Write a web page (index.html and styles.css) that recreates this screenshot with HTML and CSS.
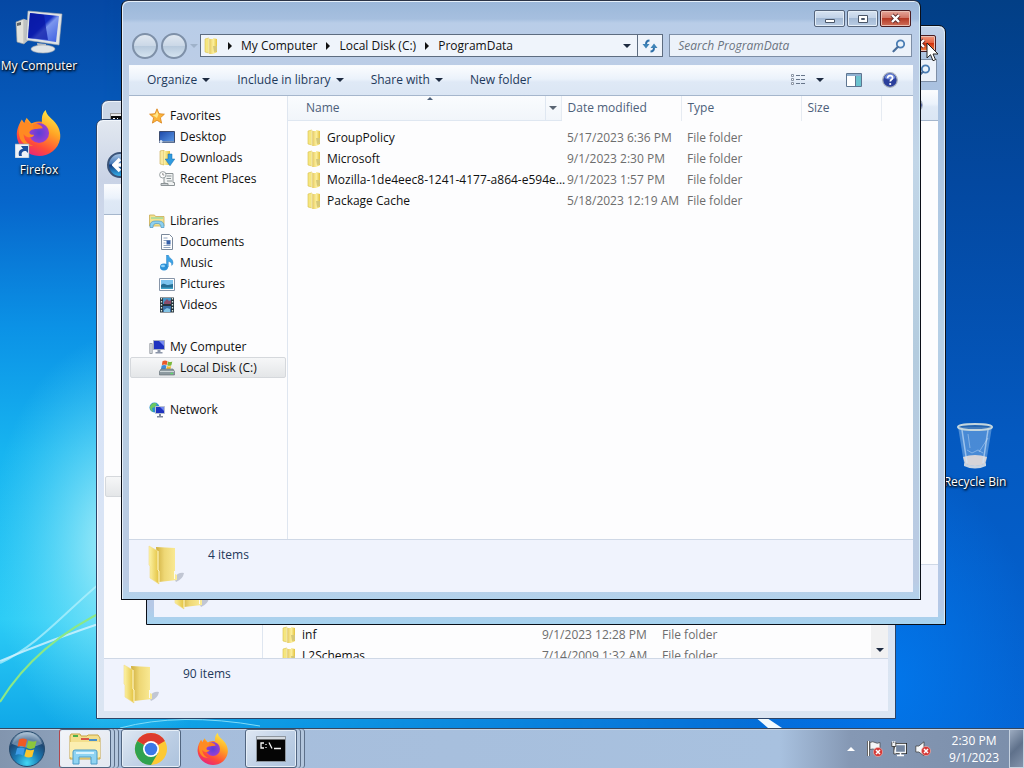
FILE: index.html
```html
<!DOCTYPE html>
<html lang="en">
<head>
<meta charset="utf-8">
<title>Desktop</title>
<link rel="stylesheet" href="styles.css">
</head>
<body>
<svg class="defs" aria-hidden="true">
  <defs>
    <linearGradient id="gFold" x1="0" x2="1"><stop offset="0" stop-color="#fdf3a6"/><stop offset="1" stop-color="#e3c23f"/></linearGradient>
    <linearGradient id="gFold2" x1="0" x2="1"><stop offset="0" stop-color="#cfae3e"/><stop offset=".4" stop-color="#eed775"/><stop offset="1" stop-color="#fbec98"/></linearGradient>
    <linearGradient id="gScreen" x1="0" y1="0" x2="1" y2="1"><stop offset="0" stop-color="#0a1fa8"/><stop offset=".45" stop-color="#1430c4"/><stop offset=".55" stop-color="#7b96ee"/><stop offset="1" stop-color="#3a5ce0"/></linearGradient>
    <linearGradient id="gFox" x1=".8" y1="0" x2=".3" y2="1"><stop offset="0" stop-color="#fff04a"/><stop offset=".4" stop-color="#ffa425"/><stop offset=".75" stop-color="#ff4b3a"/><stop offset="1" stop-color="#e8227e"/></linearGradient>
    <radialGradient id="gPurple"><stop offset="0" stop-color="#5a3fd8"/><stop offset="1" stop-color="#9a3fd0"/></radialGradient>
    <radialGradient id="gOrb" cx=".5" cy=".9" r=".9"><stop offset="0" stop-color="#42d8f4"/><stop offset=".4" stop-color="#1a7ab4"/><stop offset=".75" stop-color="#1d4672"/><stop offset="1" stop-color="#a9c0d4"/></radialGradient>
    <linearGradient id="gBlue" x1="0" y1="0" x2="1" y2="1"><stop offset="0" stop-color="#1c48a8"/><stop offset="1" stop-color="#5e9be8"/></linearGradient>

    <symbol id="folder" viewBox="0 0 16 18">
      <path d="M2 2l4-1v15l-4-1z" fill="#f5e67f" stroke="#d9c04a" stroke-width=".6"/>
      <path d="M6 2h4v15H6z" fill="url(#gFold2)"/>
      <path d="M10 1l4 1v13l-4 2z" fill="url(#gFold)"/>
      <path d="M10 9h4v5l-3 1z" fill="#d6c878"/>
      <path d="M6 1v16" stroke="#fffbe0" stroke-width=".8"/>
    </symbol>
    <symbol id="bigfolder" viewBox="0 0 38 42">
      <path d="M26 34q4-6 10-5-1 6-8 9z" fill="#7b8294" opacity=".4"/>
      <path d="M8 3l19 1v26l2 1v5l-18 2z" fill="url(#gFold2)"/>
      <path d="M1 2l9 5v19l1 1v13l-9-6V22l-1-1z" fill="url(#gFold)" stroke="#f1dc8c" stroke-width=".6"/>
      <path d="M10 7v19l1 1v12" stroke="#fff6c4" fill="none"/>
      <path d="M26 27h1v8h-1z" fill="#fbfbf0"/>
    </symbol>
    <symbol id="star" viewBox="0 0 16 16"><path d="M8 .8l2 4.900 5.400.5-4 3.600 1.200 5.300L8 12.300l-4.600 2.800 1.200-5.300-4-3.600L6 5.700z" fill="#fbb43a" stroke="#d98118" stroke-width=".8"/><path d="M8 3l1.400 3.500L8 10 3.500 7l3-.4z" fill="#ffe68a"/></symbol>
    <symbol id="desk" viewBox="0 0 16 16"><path d="M.5 2.500h15v11H.5z" fill="url(#gBlue)" stroke="#3c4c70"/><path d="M1 12h14v1.500H1z" fill="#7e96b8"/><circle cx="2" cy="12.500" r="1.500" fill="#dbe8f6"/></symbol>
    <symbol id="down" viewBox="0 0 16 16"><path d="M1 1l4-1v15l-4-1z" fill="#f8e9a0" stroke="#c9a94a" stroke-width=".6"/><path d="M5 1h6v14H5z" fill="url(#gFold)"/><path d="M9 4h4v5h2.800L11 15.800 6.200 9H9z" fill="#2f9be0" stroke="#1d6cab" stroke-width=".5"/></symbol>
    <symbol id="recent" viewBox="0 0 16 16"><path d="M5 2.500h9v9h1.500v3H6.500V12H5z" fill="#f1f3f3" stroke="#8d9497"/><path d="M7.500 5h5M7.500 7.500h4.500M8 10h5" stroke="#8a9396" fill="none"/><path d="M2 12.500h7v2H2z" fill="#c8cdd0" stroke="#8d9497"/><circle cx="3.800" cy="3.800" r="3.200" fill="#fff" stroke="#9aa1a4"/><path d="M3.800 2v2h1.500" stroke="#666" fill="none" stroke-width=".7"/></symbol>
    <symbol id="lib" viewBox="0 0 16 16"><path d="M.5 2h5l1 1.500H15V13H.5z" fill="#f5e28e" stroke="#c9ac53" stroke-width=".8"/><path d="M2 4h12v2H2z" fill="#b5dc9a"/><path d="M1 14.500c0-5 1-6.500 7-6.500s7 1.500 7 6.500h-3c0-3-1-4-4-4s-4 1-4 4z" fill="#8ed0f0" stroke="#4a95c4" stroke-width=".7"/></symbol>
    <symbol id="doc" viewBox="0 0 16 16"><path d="M2.500.5h8l3 3v12h-11z" fill="#fff" stroke="#7c8a9c"/><path d="M4.500 4h4M4.500 6.500h7M4.500 9h2M4.500 11.500h7M4.500 13.500h7" stroke="#90a4c0"/><path d="M7.500 6.500h4v4h-4z" fill="#345fa8"/></symbol>
    <symbol id="music" viewBox="0 0 16 16"><ellipse cx="5" cy="12" rx="4" ry="3.400" fill="#2b91d8"/><path d="M7.500 0h1.800c.4 3 4.700 3.500 4.700 7.500 0 1.500-.6 2.500-1.300 3C13 7.500 11 6.500 9.300 6.500V12H7.500z" fill="#3ca3e6" stroke="#1e74b8" stroke-width=".4"/><ellipse cx="4" cy="11" rx="2" ry="1.300" fill="#8fd2fa"/></symbol>
    <symbol id="pic" viewBox="0 0 16 16"><path d="M.5 2.500h15v12H.5z" fill="#fff" stroke="#8795a8"/><path d="M2 4h12v9H2z" fill="#7cc4ee"/><path d="M2 9c3-3 5 0 7 0s3-1 5-1v5H2z" fill="#266f94"/><path d="M2 11.500h12V13H2z" fill="#3fa3c8"/></symbol>
    <symbol id="video" viewBox="0 0 16 16"><path d="M1 .5h14v15H1z" fill="#26333c"/><path d="M4 1h8v6H4z" fill="#4597c8"/><path d="M4 9h8v6H4z" fill="#3a70a8"/><path d="M5 5l3-3 2 2 2-1v4H5z" fill="#8a4d6c"/><path d="M5 13l3-2 3 1v3H5z" fill="#83c3e4"/><path d="M2.500 1v14M13.500 1v14" stroke="#d8eae4" stroke-width="1.300" stroke-dasharray="1.500 1.500"/></symbol>
    <symbol id="comp" viewBox="0 0 16 16"><path d="M.8 4.500h2.400v10H.8z" fill="#dde1e4" stroke="#8b9299" stroke-width=".8"/><path d="M4.500 1.500h11v9h-11z" fill="#1f33c0" stroke="#a8afc0"/><path d="M10 2h5v5z" fill="#7a8df0"/><path d="M8.500 11h3v2h2v1.500h-7V13h2z" fill="#8b95a8"/></symbol>
    <symbol id="disk" viewBox="0 0 16 16"><path d="M3.500 1.200q2.500-1.500 5 0L7.700 5q-2.200-1.200-4.800 0z" fill="#e8592a"/><path d="M9 1.500q2 1 4.300 0L12.400 5.200q-2 1-4.200 0z" fill="#7ab83c"/><path d="M2.700 5.500q2.500-1.200 4.800 0L6.700 9H2z" fill="#3d8ad8"/><path d="M8 6q2 1 4.200 0L11.400 9H7.300z" fill="#f5bd30"/><path d="M2 9h12l1.500 2.500v3.500H.5v-3.500z" fill="#8d9aa0" stroke="#5e6a70" stroke-width=".6"/><path d="M1 11.500h14" stroke="#cdd6d8"/><path d="M11.500 13.500h2.500" stroke="#5be06a" stroke-width="1.400"/></symbol>
    <symbol id="net" viewBox="0 0 16 16"><circle cx="5.500" cy="5.500" r="5" fill="#2a8fd0"/><path d="M2 3c2-3 5-2 6-1L6 5 3 6l1 4C1 8 0 5 2 3z" fill="#6cc760"/><path d="M6.500 4.500h9v7h-9z" fill="#1f33c0" stroke="#b8c0d0"/><path d="M11 5h4v4z" fill="#7288f0"/><path d="M10 12h2v2h2v1.500H8V14h2z" fill="#7c879c"/></symbol>
    <symbol id="mag" viewBox="0 0 14 14"><circle cx="8.500" cy="5" r="3.700" fill="#eaf4fc" fill-opacity=".6" stroke="#4a7db4" stroke-width="1.800"/><path d="M5.700 8L1.500 12.300" stroke="#4a6f9c" stroke-width="2.200" stroke-linecap="round"/></symbol>
    <symbol id="help" viewBox="0 0 16 16"><circle cx="8" cy="8" r="7.300" fill="#2b3f9c" stroke="#a8b0bc" stroke-width="1.200"/><path d="M2.500 6a5.600 5.600 0 0 1 11 0Q8 9 2.500 6z" fill="#6b85d8"/><path d="M5.600 6.200q0-2.500 2.500-2.500t2.500 2.200c0 1.600-2.300 1.700-2.300 3.500" fill="none" stroke="#fff" stroke-width="1.700"/><circle cx="8.200" cy="12" r="1.100" fill="#fff"/></symbol>
    <symbol id="fox" viewBox="0 0 48 48">
      <circle cx="24" cy="27" r="15" fill="#ff7a2a"/>
      <path d="M27 9c0-4 2-7 4-9 1 5 4 7 8 11 6 6 8 13 7 19-2 11-11 18-22 18S2 39 1 28C0 20 4 14 6 10l3 4 2-6 5 6c3-1 7-1 11 1z" fill="url(#gFox)"/>
      <circle cx="24" cy="24" r="10.500" fill="url(#gPurple)"/>
      <path d="M5 12l3 3 2-5 6 5c3-1 6 1 7 4-3 1-8 1-9 4 0 3 3 3 5 3-2 4-9 3-11-1 0 6 4 11 10 12C8 39 2 31 3 20z" fill="#ff8a22"/>
      <path d="M18 14c5 0 9 2 10 5l-10 1z" fill="#ff7e25"/>
    </symbol>
    <symbol id="bad" viewBox="0 0 10 10"><circle cx="5" cy="5" r="4.600" fill="#d63a38" stroke="#f0b8b4" stroke-width=".6"/><path d="M3 3l4 4M7 3L3 7" stroke="#fff" stroke-width="1.500"/></symbol>
  </defs>
</svg>

<div class="screen">
<main class="desktop">
  <svg class="wallpaper" viewBox="0 0 1024 728" preserveAspectRatio="none" aria-hidden="true">
    <defs>
      <linearGradient id="wBase" x1="0" x2="0" y1="0" y2="1"><stop offset="0" stop-color="#0548a4"/><stop offset=".28" stop-color="#0767cc"/><stop offset=".45" stop-color="#0b92e6"/><stop offset=".62" stop-color="#17b4f0"/><stop offset=".85" stop-color="#2cccf6"/><stop offset="1" stop-color="#10a8e8"/></linearGradient>
      <linearGradient id="wRight" x1="0" x2="0" y1="0" y2="1"><stop offset="0" stop-color="#023f86"/><stop offset=".25" stop-color="#0348a0"/><stop offset=".6" stop-color="#0459c0"/><stop offset="1" stop-color="#0464d4"/></linearGradient>
      <linearGradient id="wMask" x1="0" x2="1"><stop offset=".1" stop-color="#000"/><stop offset=".85" stop-color="#fff"/></linearGradient>
      <mask id="wM"><path d="M0 0h1024v728H0z" fill="url(#wMask)"/></mask>
      <radialGradient id="wGlow"><stop offset="0" stop-color="#c4f6fa" stop-opacity=".9"/><stop offset="1" stop-color="#62e0f8" stop-opacity="0"/></radialGradient>
      <radialGradient id="wLow"><stop offset="0" stop-color="#0276ea"/><stop offset="1" stop-color="#0276ea" stop-opacity="0"/></radialGradient>
    </defs>
    <path d="M0 0h1024v728H0z" fill="url(#wBase)"/>
    <path d="M0 0h1024v728H0z" fill="url(#wRight)" mask="url(#wM)"/>
    <ellipse cx="120" cy="545" rx="130" ry="210" fill="url(#wGlow)"/>
    <ellipse cx="890" cy="680" rx="150" ry="220" fill="url(#wLow)"/>
    <path d="M0 663C40 645 70 606 110 575" fill="none" stroke="#b8f2fc" stroke-width="2" opacity=".7"/>
    <path d="M0 661Q50 640 110 620" fill="none" stroke="#d6f4ff" stroke-width="2" opacity=".8"/>
    <path d="M0 702Q36 643 110 608" fill="none" stroke="#8be886" stroke-width="2"/>
    <path d="M120 728Q180 712 260 726" fill="none" stroke="#7fdcf8" stroke-width="1"/>
    <path d="M754 716h10l18 12h-14z" fill="#f2fbff"/>
  </svg>

  <a href="#computer" class="shortcut sc-computer">
    <svg width="48" height="44" viewBox="0 0 48 44"><path d="M1 12l8-3v25l-7-2z" fill="#e2e2dc" stroke="#9a9c98" stroke-width=".6"/><path d="M9 9l6 2v18l-6 5z" fill="#bfc2c2"/><path d="M2 13l4-1v3l-4 1z" fill="#5f6568"/><path d="M13 1l34 3-3 31-33-5z" fill="#dfe3e6" stroke="#a4a9ae" stroke-width=".6"/><path d="M15 3l29 3-3 26-28-4z" fill="url(#gScreen)"/><path d="M15 3l14 2 4 25-20-2z" fill="#0716a4" opacity=".7"/><path d="M22 33l9 1v4h-8z" fill="#b9bec4"/><ellipse cx="28" cy="39" rx="12" ry="4" fill="#dfe3e6" stroke="#a4a9ae" stroke-width=".6"/></svg>
    <span>My Computer</span>
  </a>
  <a href="#firefox" class="shortcut sc-firefox">
    <svg width="48" height="48" viewBox="0 0 48 48"><use href="#fox" width="46" height="46" x="1"/><path d="M0 34h14v14H0z" fill="#eef3f8" stroke="#8a9bb0" stroke-width=".6"/><path d="M4 46c-1-5 1-7 4-7l-2-3h7v7l-2-2c-4 0-5 2-4 5z" fill="#1c4f9c"/></svg>
    <span>Firefox</span>
  </a>
  <a href="#bin" class="shortcut sc-bin">
    <svg width="40" height="48" viewBox="0 0 40 48"><path d="M3 5h34l-6 36q-11 6-22 0z" fill="#a9d0f4" fill-opacity=".42"/><path d="M8 35q12-4 24 0l-2 7q-10 4-20 0z" fill="#e6dcd8" opacity=".9"/><path d="M7 8l5 33M33 8l-5 33" stroke="#d4e8fb" stroke-width="1.500" opacity=".6"/><path d="M13 12l2 14M24 30l9-14M12 28l5 3 6-3 5 3" stroke="#dcecfb" opacity=".4" fill="none"/><path d="M9 41q11 5 22 0v3q-11 5-22 0z" fill="#c8d4e2"/><ellipse cx="20" cy="5" rx="17" ry="3" fill="#3b6ea8" fill-opacity=".6" stroke="#c4d6de" stroke-width="2"/></svg>
    <span>Recycle Bin</span>
  </a>

  <section class="window console" aria-label="Console">
    <svg width="16" height="16" viewBox="0 0 16 16"><path d="M.5.5h15v15H.5z" fill="#0a0a0a" stroke="#9a9a9a"/><path d="M1 1h14v2H1z" fill="#e8e8e8"/><path d="M3 5h2v1H3zM7 5h1v3H7z" fill="#fff"/></svg>
  </section>

  <section class="window w-back" aria-label="Background folder">
    <div class="caption"></div>
    <div class="navrow">
      <button class="round lit" aria-label="Back"><svg width="16" height="16" viewBox="0 0 16 16"><path d="M8 2L2 8l6 6M2 8h12" stroke="#fff" stroke-width="3.500" fill="none"/></svg></button>
    </div>
    <div class="toolbar"></div>
    <div class="body">
      <nav class="side"><a class="item picked ghost" href="#c" aria-label="Drive"></a></nav>
      <div class="files tail">
        <table class="list">
          <colgroup><col class="c-name"><col class="c-date"><col class="c-type"><col></colgroup>
          <tbody>
            <tr><td><div class="fname"><svg width="16" height="18"><use href="#folder"/></svg><span>inf</span></div></td><td>9/1/2023 12:28 PM</td><td>File folder</td><td></td></tr>
            <tr><td><div class="fname"><svg width="16" height="18"><use href="#folder"/></svg><span>L2Schemas</span></div></td><td>7/14/2009 1:32 AM</td><td>File folder</td><td></td></tr>
          </tbody>
        </table>
      </div>
      <div class="scroll"><button aria-label="Scroll down"><i class="tri"></i></button></div>
    </div>
    <footer class="details"><svg width="38" height="42"><use href="#bigfolder"/></svg><span>90 items</span></footer>
  </section>

  <section class="window w-mid" aria-label="Second folder">
    <div class="caption"><button class="cap close hot" aria-label="Close"><svg width="13" height="11" viewBox="0 0 13 11"><path d="M3 2l7 7M10 2L3 9" stroke="#6b2a22" stroke-width="4"/><path d="M3 2l7 7M10 2L3 9" stroke="#fff" stroke-width="2.400"/></svg></button></div>
    <div class="navrow"><span class="grow"></span><div class="search"><input aria-label="Search"><svg width="14" height="14"><use href="#mag"/></svg></div></div>
    <div class="toolbar"><span class="grow"></span><button class="tool" aria-label="Help"><svg width="16" height="16"><use href="#help"/></svg></button></div>
    <div class="body"></div>
    <footer class="details"><svg width="38" height="42"><use href="#bigfolder"/></svg></footer>
  </section>

  <section class="window w-front" aria-label="ProgramData">
    <div class="caption">
      <button class="cap" aria-label="Minimize"><svg width="12" height="10" viewBox="0 0 12 10"><path d="M1.500 5.500h9v3h-9z" fill="#fff" stroke="#4a5668"/></svg></button>
      <button class="cap" aria-label="Maximize"><svg width="12" height="10" viewBox="0 0 12 10"><path d="M1.500 1.500h9v7h-9z" fill="#fff" stroke="#4a5668"/><path d="M4.500 4.500h3v1h-3z" fill="#b8c8dc" stroke="#4a5668"/></svg></button>
      <button class="cap close" aria-label="Close"><svg width="13" height="11" viewBox="0 0 13 11"><path d="M3 2l7 7M10 2L3 9" stroke="#5c2a2a" stroke-width="4"/><path d="M3 2l7 7M10 2L3 9" stroke="#fff" stroke-width="2.400"/></svg></button>
    </div>
    <div class="navrow">
      <div class="pair">
        <button class="round" aria-label="Back"></button>
        <button class="round" aria-label="Forward"></button>
        <button class="histo" aria-label="Recent pages"><i class="tri pale"></i></button>
      </div>
      <div class="address">
        <svg width="16" height="18"><use href="#folder"/></svg>
        <i class="chev"></i><button>My Computer</button>
        <i class="chev"></i><button>Local Disk (C:)</button>
        <i class="chev"></i><button>ProgramData</button>
        <span class="grow"></span>
        <button class="drop" aria-label="Previous locations"><i class="tri"></i></button>
        <button class="refresh" aria-label="Refresh"><svg width="16" height="14" viewBox="0 0 16 14"><path d="M7.500 1.500q-3.500 0-3.500 4M8.500 12.500q3.500 0 3.500-4" stroke="#2f6fa8" stroke-width="2" fill="none"/><path d="M.5 5h7L4 9.500zM8.500 9h7L12 4.500z" fill="#3f84b8"/></svg></button>
      </div>
      <div class="search"><input type="search" aria-label="Search ProgramData" placeholder="Search ProgramData"><svg width="14" height="14"><use href="#mag"/></svg></div>
    </div>
    <div class="toolbar">
      <button class="t1">Organize <i class="tri"></i></button>
      <button class="t2">Include in library <i class="tri"></i></button>
      <button class="t3">Share with <i class="tri"></i></button>
      <button>New folder</button>
      <span class="grow"></span>
      <button class="tool" aria-label="Change view"><svg width="16" height="14" viewBox="0 0 16 14"><path d="M1.500 1.500h2v2h-2zM1.500 5.500h2v2h-2zM1.500 9.500h2v2h-2z" fill="#fff" stroke="#8a94a4"/><path d="M6 2.500h4M11 2.500h4M6 6.500h4M11 6.500h4M6 10.500h4M11 10.500h4" stroke="#67758a"/></svg></button>
      <button class="tool more" aria-label="More options"><i class="tri"></i></button>
      <button class="tool" aria-label="Preview pane"><svg width="16" height="14" viewBox="0 0 16 14"><path d="M.5.5h15v13H.5z" fill="#fff" stroke="#5e7590"/><path d="M1 1h14v2H1z" fill="#8fb0d0"/><path d="M10 3h5v10h-5z" fill="#6cc3cf"/><path d="M9.500 3v10" stroke="#5e7590"/></svg></button>
      <button class="tool" aria-label="Help"><svg width="16" height="16"><use href="#help"/></svg></button>
    </div>
    <div class="body">
      <nav class="side">
        <a class="item top" href="#fav"><svg width="16" height="16"><use href="#star"/></svg>Favorites</a>
        <a class="item" href="#desktop"><svg width="16" height="16"><use href="#desk"/></svg>Desktop</a>
        <a class="item" href="#downloads"><svg width="16" height="16"><use href="#down"/></svg>Downloads</a>
        <a class="item" href="#recent"><svg width="16" height="16"><use href="#recent"/></svg>Recent Places</a>
        <a class="item top gap" href="#libraries"><svg width="16" height="16"><use href="#lib"/></svg>Libraries</a>
        <a class="item" href="#documents"><svg width="16" height="16"><use href="#doc"/></svg>Documents</a>
        <a class="item" href="#music"><svg width="16" height="16"><use href="#music"/></svg>Music</a>
        <a class="item" href="#pictures"><svg width="16" height="16"><use href="#pic"/></svg>Pictures</a>
        <a class="item" href="#videos"><svg width="16" height="16"><use href="#video"/></svg>Videos</a>
        <a class="item top gap" href="#mycomputer"><svg width="16" height="16"><use href="#comp"/></svg>My Computer</a>
        <a class="item picked" href="#drive"><svg width="16" height="16"><use href="#disk"/></svg>Local Disk (C:)</a>
        <a class="item top gap" href="#network"><svg width="16" height="16"><use href="#net"/></svg>Network</a>
      </nav>
      <div class="files">
        <table class="list">
          <colgroup><col class="c-name"><col class="c-date"><col class="c-type"><col class="c-size"><col></colgroup>
          <thead><tr><th class="sorted"><div class="hname">Name<i class="up"></i><span class="filter"><i class="tri grey"></i></span></div></th><th>Date modified</th><th>Type</th><th>Size</th><th></th></tr></thead>
          <tbody>
            <tr><td><div class="fname"><svg width="16" height="18"><use href="#folder"/></svg><span>GroupPolicy</span></div></td><td>5/17/2023 6:36 PM</td><td>File folder</td><td></td><td></td></tr>
            <tr><td><div class="fname"><svg width="16" height="18"><use href="#folder"/></svg><span>Microsoft</span></div></td><td>9/1/2023 2:30 PM</td><td>File folder</td><td></td><td></td></tr>
            <tr><td><div class="fname"><svg width="16" height="18"><use href="#folder"/></svg><span>Mozilla-1de4eec8-1241-4177-a864-e594e...</span></div></td><td>9/1/2023 1:57 PM</td><td>File folder</td><td></td><td></td></tr>
            <tr><td><div class="fname"><svg width="16" height="18"><use href="#folder"/></svg><span>Package Cache</span></div></td><td>5/18/2023 12:19 AM</td><td>File folder</td><td></td><td></td></tr>
          </tbody>
        </table>
      </div>
    </div>
    <footer class="details"><svg width="38" height="42"><use href="#bigfolder"/></svg><span>4 items</span></footer>
  </section>

  <svg class="cursor" width="13" height="20" viewBox="0 0 13 20" aria-hidden="true"><path d="M1 1v15l3.500-3.300 2.500 6 2.500-1-2.500-5.700h5z" fill="#fff" stroke="#222"/></svg>
</main>

<footer class="taskbar">
  <button class="start" aria-label="Start"><svg width="38" height="38" viewBox="0 0 38 38"><circle cx="19" cy="19" r="17.500" fill="url(#gOrb)" stroke="#24496c"/><path d="M4 14a15.500 15.500 0 0 1 30 0q-15 7-30 0z" fill="#d4e4f0" opacity=".4"/><path d="M11 9.500q4-2 8 .3l-1.800 7.400q-4-2.200-7.700-.5z" fill="#ee5a24"/><path d="M20.300 10.500q4 2 8.300.2l-2 7.400q-4 1.800-8-.4z" fill="#8cc63c"/><path d="M9 18.200q4-1.700 7.800.4l-1.900 7q-4-2.200-7.500-.5z" fill="#3d9ce8"/><path d="M18.200 19.200q4 2 8 .4l-2 7.200q-4 1.500-7.800-.6z" fill="#fdc62c"/></svg></button>
  <button class="task stack current" aria-label="Explorer"><svg width="34" height="32" viewBox="0 0 34 32"><path d="M2 3l1-2h9l1 2h6l1-1h10l2 3v21H2z" fill="#f3df8d" stroke="#c7a545"/><path d="M5 2h5v2H5z" fill="#4bb04a"/><path d="M13 5h8v2h-8z" fill="#d8584a"/><path d="M21 6h8v2h-8z" fill="#4a90c8"/><path d="M2 9h30v15H2z" fill="#fbeeb0"/><path d="M5 31V19q0-2 2-2h20q2 0 2 2v12h-6v-7H11v7z" fill="#8fd4f2" stroke="#4d9cc8"/><path d="M8 20h18" stroke="#d9f3fd" stroke-width="2"/></svg></button>
  <button class="task" aria-label="Chrome"><svg width="34" height="34" viewBox="0 0 34 34"><circle cx="17" cy="17" r="16" fill="#fcc934"/><path d="M17 17L3.140 9a16 16 0 0 1 27.720 0z" fill="#dd3b2e"/><path d="M3.140 9A16 16 0 0 0 17 33l7-12-7-4z" fill="#2fa24f"/><circle cx="17" cy="17" r="8" fill="#fff"/><circle cx="17" cy="17" r="6.300" fill="#3b78e7"/></svg></button>
  <button class="task flat" aria-label="Firefox"><svg width="32" height="32"><use href="#fox"/></svg></button>
  <button class="task stack" aria-label="Command prompt"><svg width="30" height="26" viewBox="0 0 30 26"><path d="M.5.5h29v25H.5z" fill="#050505" stroke="#8e969e"/><path d="M1 1h28v2.500H1z" fill="#d4dae0"/><path d="M8 7H5v5h3M10 8v1M10 11v1M13 6.500l3 6M18 12.500h7" stroke="#f4f4f4" stroke-width="1.300" fill="none"/></svg></button>
  <span class="grow"></span>
  <div class="tray">
    <button aria-label="Show hidden icons"><i class="uptri"></i></button>
    <button aria-label="Action Center"><svg width="16" height="16" viewBox="0 0 16 16"><path d="M1.500 0v15" stroke="#333" stroke-width="3"/><path d="M1.500 0v15" stroke="#fff" stroke-width="1.500"/><path d="M3 1.500q3-1.500 5 0t5 0v7q-3 1-5 0t-5 0z" fill="#f4f6f8" stroke="#444" stroke-width=".7"/><use href="#bad" x="6" y="6" width="10" height="10"/></svg></button>
    <button aria-label="Network"><svg width="16" height="16" viewBox="0 0 16 16"><path d="M4.500 3.500h10v8h-10z" fill="#7f8c9c" stroke="#222" stroke-width="3"/><path d="M4.500 3.500h10v8h-10z" fill="#7486a0" stroke="#f2f5f8" stroke-width="1.300"/><path d="M6 14.500h7M9.500 12v2" stroke="#fff" stroke-width="1.500"/><path d="M.8 1.500h4v4h-4zM2.800 5v8h2" fill="#f4f6f8" stroke="#333" stroke-width=".8"/><path d="M1.800 0v2M3.800 0v2" stroke="#fff"/></svg></button>
    <button aria-label="Volume muted"><svg width="16" height="16" viewBox="0 0 16 16"><path d="M.8 5h3L9 .8v14L3.800 11h-3z" fill="#f6f8fa" stroke="#444" stroke-width=".8"/><use href="#bad" x="6" y="5" width="10" height="10"/></svg></button>
  </div>
  <div class="clock"><span>2:30 PM</span><span>9/1/2023</span></div>
  <button class="peek" aria-label="Show desktop"></button>
</footer>
</div>
</body>
</html>
```
FILE: styles.css
```css
* { box-sizing: border-box; }
body { margin: 0; font: 12px/16px "Open Sans", "Noto Sans", sans-serif; color: #111; }
button, input { font: inherit; color: inherit; background: none; border: 0; padding: 0; margin: 0; }
a { color: inherit; text-decoration: none; }
svg { display: block; flex: none; }
.defs { position: absolute; width: 0; height: 0; }
.grow { flex: 1; }

.screen { height: 100vh; display: flex; flex-direction: column; overflow: hidden; }
.desktop { position: relative; flex: 1; overflow: hidden; }
.wallpaper { position: absolute; width: 100%; height: 100%; }

/* desktop shortcuts */
.shortcut { position: absolute; width: 80px; display: flex; flex-direction: column; align-items: center; gap: 4px; color: #fff; text-shadow: 1px 1px 2px #000, 0 1px 3px #000; white-space: nowrap; }
.sc-computer { left: -1px; top: 10px; }
.sc-firefox { left: -1px; top: 110px; }
.sc-bin { right: 9px; top: 422px; }

/* windows on the desktop */
.window { position: absolute; display: flex; flex-direction: column; padding: 0 7px 7px; border: 1px solid #0b0f18; border-radius: 7px 7px 0 0; overflow: hidden; }
.console { left: 101px; right: 240px; top: 100px; bottom: 200px; padding: 12px 8px; background: #cbd6e6; border-color: #33507c; box-shadow: inset 1px 1px #eef4fa; }
.w-back { left: 96px; right: 128px; top: 119px; bottom: 9px; background: linear-gradient(#e2e8f0, #c9d3e6 60px, #d7e3f8 200px, #dbe5f2); border-color: #2c4468; box-shadow: inset 1px 1px #f2f7fd; }
.w-mid { left: 146px; right: 78px; top: 25px; bottom: 103px; background: linear-gradient(#c2d2e8, #a9c0df 40px, #b6d0e6 300px, #b6c8e6 580px, #a6d4f0); box-shadow: inset -1px 1px #dcebf8; }
.w-front { left: 121px; right: 103px; top: 0; bottom: 128px; border-top-color: #2b3346; background: linear-gradient(#9bb7d9, #a6bfdf 18px, #b9cde8 22px, #bccde6 66px, #c2d6e8 160px, #b4ccdf 350px, #bbcbe4 580px, #b2d2ec); box-shadow: inset 1px 1px #e6f0fa, inset -1px 0 #d4ecf8; }

.caption { height: 33px; padding: 9px 2px 0 0; display: flex; justify-content: flex-end; gap: 2px; flex: none; }
.cap { width: 31px; height: 17px; border: 1px solid #56657c; border-radius: 2px; background: linear-gradient(#d7e3f1, #c2d3e8 45%, #a3b9d5 50%, #bacde4); box-shadow: inset 0 0 0 1px #e3edf7; display: flex; align-items: center; justify-content: center; }
.close { border-color: #4a1d22; background: linear-gradient(#e5a79b, #d27565 45%, #b53a26 50%, #d0705a); box-shadow: inset 0 0 0 1px #eac0b4; }
.close.hot { background: linear-gradient(#f09a80, #e4613f 45%, #d0300c 50%, #f48a4a); }

.navrow { height: 31px; padding: 0 1px 8px 0; display: flex; align-items: center; gap: 6px; flex: none; }
.pair { display: flex; align-items: center; gap: 3px; width: 65px; padding-left: 3px; }
.round { width: 26px; height: 26px; flex: none; border: 2px solid #7e90a8; border-radius: 50%; background: linear-gradient(#e0e8f1, #cbd8e7 48%, #b8cadd 52%, #d4e3f0); display: flex; align-items: center; justify-content: center; }
.round.lit { margin: 0 0 0 3px; border-color: #3b5478; background: linear-gradient(#a8c4e4, #4479b8 45%, #123c80 50%, #35b0ea); }
.histo { width: 8px; display: flex; justify-content: center; }
.address { flex: 1; height: 23px; display: flex; align-items: center; padding-left: 2px; border: 1px solid #5d6c80; background: #eff4fb; white-space: nowrap; overflow: hidden; }
.address .chev { margin: 0 9px; }
.drop { width: 20px; display: flex; justify-content: center; }
.refresh { align-self: stretch; width: 25px; border-left: 1px solid #5d6c80; display: flex; align-items: center; justify-content: center; }
.search { width: 31%; height: 23px; display: flex; align-items: center; padding: 0 5px 0 8px; border: 1px solid #7d8ea6; background: #ecf2fa; }
.search input { flex: 1; min-width: 0; outline: 0; appearance: none; }
.search input::placeholder { color: #6b7480; font-style: italic; opacity: 1; }

/* arrows */
.tri { display: inline-block; border: 4px solid transparent; border-top-color: #1d2a40; border-bottom: 0; }
.tri.pale { border-top-color: #9fb2ca; }
.tri.grey { border-top-color: #596472; }
.chev { border: 4px solid transparent; border-left-color: #111; border-right: 0; }
.uptri { border: 4px solid transparent; border-bottom-color: #fff; border-top: 0; }

.toolbar { height: 31px; flex: none; display: flex; align-items: center; padding: 0 15px 1px 18px; border-top: 1px solid #f8fbfe; border-bottom: 1px solid #a5b6cc; background: linear-gradient(#fbfcfe, #ebf2fb 45%, #dfe9f6 55%, #dbe6f4); color: #1e395b; white-space: nowrap; }
.toolbar button { display: flex; align-items: center; gap: 5px; }
.toolbar .t1, .toolbar .t2, .toolbar .t3 { margin-right: 27px; }
.toolbar .tool { margin-left: 20px; }
.toolbar .more { margin: 0 2px 0 10px; }

.body { flex: 1; min-height: 0; display: flex; background: #fdfdfe; overflow: hidden; }
.side { width: 159px; flex: none; padding: 9px 1px 0; border-right: 1px solid #dfe6f0; }
.item { height: 21px; display: flex; align-items: center; gap: 5px; padding-left: 28px; border: 1px solid transparent; border-radius: 2px; white-space: nowrap; }
.item.top { padding-left: 18px; }
.item.gap { margin-top: 21px; }
.item.picked { border-color: #d5d8dc; background: linear-gradient(#f6f7f8, #e4e6e8); }
.item.ghost { margin-top: 252px; }

.files { flex: 1; min-width: 0; overflow: hidden; }
.tail { display: flex; flex-direction: column; justify-content: flex-end; }
.tail .list { margin-bottom: -8px; }
.list { width: 100%; table-layout: fixed; border-collapse: collapse; color: #6d6d6d; white-space: nowrap; }
.c-name { width: 273px; }
.c-date, .c-type { width: 120px; }
.c-size { width: 80px; }
.list th { height: 24px; padding: 0 0 0 6px; font-weight: 400; text-align: left; color: #4c607a; border-right: 1px solid #e6ebf2; }
.list th:last-child { border: 0; }
.list th.sorted { padding: 0; background: linear-gradient(#fafcfe, #f1f5fa); border-bottom: 1px solid #dfe7f1; }
.hname { height: 24px; position: relative; display: flex; align-items: center; justify-content: space-between; padding-left: 18px; }
.up { position: absolute; top: 1px; left: 51%; border: 3px solid transparent; border-bottom-color: #4c607a; border-top: 0; }
.filter { height: 24px; width: 16px; display: flex; align-items: center; justify-content: center; border-left: 1px solid #dfe7f1; }
.list thead::after { content: ""; display: block; height: 6px; }
.list td { height: 21px; padding: 0 0 0 6px; }
.list td:first-child { padding: 0 0 0 18px; }
.fname { display: flex; align-items: center; gap: 5px; height: 21px; color: #111; }
.fname svg { height: 18px; }
.scroll { width: 17px; background: #f1f1f2; display: flex; align-items: flex-end; justify-content: center; }
.scroll button { height: 17px; display: flex; align-items: center; }

.details { height: 53px; flex: none; display: flex; gap: 22px; padding: 4px 19px 0; border-top: 1px solid #cfd8e6; background: #f0f3fd; color: #1e395b; line-height: 22px; overflow: hidden; }

.cursor { position: absolute; left: 926px; top: 42px; }

/* taskbar */
.taskbar { height: 40px; flex: none; display: flex; align-items: center; border-top: 1px solid #36475f; box-shadow: inset 0 1px #c6d4e4; background: linear-gradient(90deg, #8295ae, #8b9fb9 56px, #a6bddb 120px, #a8c1df 780px, #8598b4 850px, #7b8eaa); }
.start { width: 54px; display: flex; justify-content: center; margin-right: 5px; }
.task { width: 60px; height: 39px; display: flex; align-items: center; justify-content: center; margin-right: 2px; border: 1px solid #516580; border-radius: 3px; background: linear-gradient(135deg, #dfe8f3, #bccee4 60%, #adc3dd); box-shadow: inset 0 0 0 1px #e5eef7; }
.task.stack { width: 52px; margin-right: 10px; box-shadow: inset 0 0 0 1px #e5eef7, 3px 0 #b3c6dd, 4px 0 #5d708a, 7px 0 #b3c6dd, 8px 0 #5d708a; }
.task.current { background: linear-gradient(135deg, #f2f4f8, #e3e8f0); border-left-color: #b3474c; }
.task.flat { border-color: transparent; background: none; box-shadow: none; }
.tray { display: flex; align-items: center; gap: 8px; margin-right: 18px; }
.tray button { width: 16px; display: flex; justify-content: center; }
.clock { display: flex; flex-direction: column; align-items: center; line-height: 17px; color: #fff; margin-right: 10px; white-space: nowrap; }
.peek { width: 15px; height: 39px; border: 1px solid #c6d2e0; background: linear-gradient(135deg, #9cabc0, #5f718b 50%, #8494ac); }
```
